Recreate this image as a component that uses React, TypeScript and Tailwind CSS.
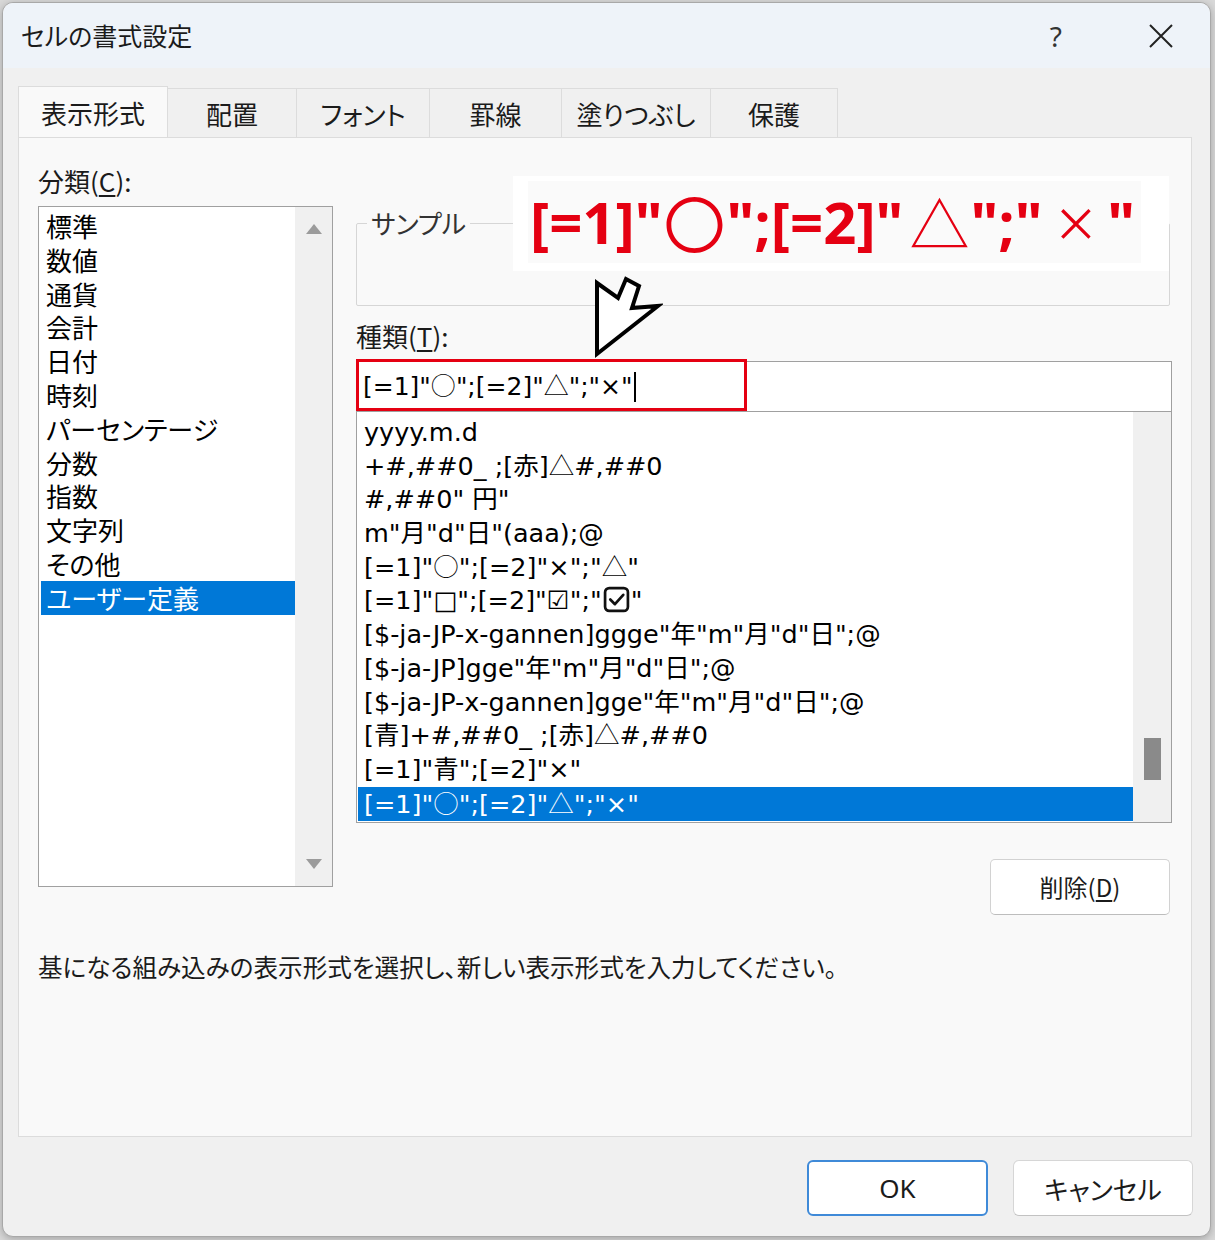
import React from "react";

function BoldCheck() {
  return (
    <svg width="27" height="27" viewBox="0 0 26 26" className="inline-block align-[-4px] mx-[1px]">
      <rect x="2" y="2" width="22" height="22" rx="4" fill="none" stroke="#111" strokeWidth="2.6" />
      <path d="M7 13 L11.5 17.5 L19.5 8.5" fill="none" stroke="#111" strokeWidth="2.6" strokeLinecap="round" strokeLinejoin="round" />
    </svg>
  );
}

const CJK = "[font-family:'Noto_Sans_CJK_JP','Noto_Sans',sans-serif] [font-feature-settings:'palt']";
const CJKW = "[font-family:'Noto_Sans_CJK_JP',sans-serif]";
const LAT = "[font-family:'DejaVu_Sans','Noto_Sans_CJK_JP',sans-serif]";
const NOTO = "[font-family:'Noto_Sans','Noto_Sans_CJK_JP',sans-serif]";

function Fmt({ s }: { s: string }) {
  const parts = s.split(/([○△])/);
  return (
    <>
      {parts.map((p, i) =>
        p === "○" || p === "△" ? (
          <span key={i} className={`${CJKW} font-light leading-none`}>{p}</span>
        ) : (
          <React.Fragment key={i}>{p}</React.Fragment>
        )
      )}
    </>
  );
}

export default function App() {
  const cats = ["標準", "数値", "通貨", "会計", "日付", "時刻", "パーセンテージ", "分数", "指数", "文字列", "その他"];
  const tabs = [
    { t: "表示形式", w: "w-[150px]" },
    { t: "配置", w: "w-[129px]" },
    { t: "フォント", w: "w-[133px]" },
    { t: "罫線", w: "w-[132px]" },
    { t: "塗りつぶし", w: "w-[149px]" },
    { t: "保護", w: "w-[127px]" },
  ];
  const fmts: React.ReactNode[] = [
    "yyyy.m.d",
    <Fmt s={"+#,##0_ ;[赤]△#,##0"} />,
    "#,##0\" 円\"",
    "m\"月\"d\"日\"(aaa);@",
    <Fmt s={"[=1]\"○\";[=2]\"×\";\"△\""} />,
    <>[=1]"□";[=2]"☑";"<BoldCheck />"</>,
    "[$-ja-JP-x-gannen]ggge\"年\"m\"月\"d\"日\";@",
    "[$-ja-JP]gge\"年\"m\"月\"d\"日\";@",
    "[$-ja-JP-x-gannen]gge\"年\"m\"月\"d\"日\";@",
    <Fmt s={"[青]+#,##0_ ;[赤]△#,##0"} />,
    "[=1]\"青\";[=2]\"×\"",
  ];
  return (
    <div className={`w-[1215px] h-[1240px] bg-[#d9d9d9] pt-[2px] pl-[2px] overflow-hidden ${CJK}`}>
      <div className="w-[1209px] h-[1235px] rounded-[11px] border border-[#a8a8a8] bg-[#f0f0f0] flex flex-col overflow-hidden shadow-[0_2px_8px_rgba(0,0,0,0.25)]">
        {/* title bar */}
        <div className="h-[65px] bg-[#eef3f9] flex items-center justify-between pl-[18px] pr-[36px] shrink-0">
          <span className="text-[25px] text-[#1b1b1b] leading-none">セルの書式設定</span>
          <div className="flex items-center gap-[86px]">
            <span className={`text-[28px] text-[#333] leading-none ${NOTO}`}>?</span>
            <svg width="26" height="26" viewBox="0 0 26 26">
              <path d="M2 2 L24 24 M24 2 L2 24" stroke="#222" strokeWidth="2" />
            </svg>
          </div>
        </div>
        {/* tabs */}
        <div className="flex mt-[20px] ml-[15px] h-[49px] shrink-0">
          {tabs.map((tb, i) =>
            i === 0 ? (
              <div key={i} className={`${tb.w} h-[51px] -mt-[2px] bg-[#f9f9f9] border border-b-0 border-[#dcdcdc] flex items-center justify-center text-[26px] text-[#1b1b1b] relative z-10`}>
                {tb.t}
              </div>
            ) : (
              <div key={i} className={`${tb.w} h-[49px] bg-[#f0f0f0] border border-l-0 border-b-0 border-[#dcdcdc] flex items-center justify-center text-[26px] text-[#1b1b1b]`}>
                {tb.t}
              </div>
            )
          )}
        </div>
        {/* panel */}
        <div className="relative ml-[15px] w-[1174px] h-[1000px] bg-[#f9f9f9] border border-[#dcdcdc] px-[19px] pt-[28px] shrink-0">
          <div className="flex gap-[23px]">
            {/* left column */}
            <div className="w-[295px] flex flex-col">
              <div className="h-[30px] leading-[30px] text-[26px] text-[#1b1b1b]">
                分類(<span className="underline underline-offset-[3px]">C</span>):
              </div>
              <div className="mt-[10px] h-[681px] border border-[#a0a0a0] bg-white flex">
                <div className="flex-1 pt-[2px] pl-[2px]">
                  {cats.map((c) => (
                    <div key={c} className="h-[33.8px] leading-[33.8px] text-[26px] text-black pl-[5px] whitespace-nowrap">
                      {c}
                    </div>
                  ))}
                  <div className="h-[33.8px] leading-[33.8px] text-[26px] text-white bg-[#0078d7] pl-[5px]">ユーザー定義</div>
                </div>
                <div className="w-[37px] bg-[#f0f0f0] flex flex-col items-center justify-between py-[17px]">
                  <svg width="16" height="10" viewBox="0 0 16 10"><path d="M8 0 L16 10 L0 10 Z" fill="#9b9b9b" /></svg>
                  <svg width="16" height="10" viewBox="0 0 16 10"><path d="M0 0 L16 0 L8 10 Z" fill="#9b9b9b" /></svg>
                </div>
              </div>
            </div>
            {/* right column */}
            <div className="w-[816px] flex flex-col">
              <fieldset className="mt-[42px] w-[814px] h-[98px] border border-[#d6d6d6] rounded-[2px]">
                <legend className="ml-[10px] px-[4px] text-[26px] leading-[30px] text-[#333]">サンプル</legend>
              </fieldset>
              <div className="mt-[15px] h-[30px] leading-[30px] text-[26px] text-[#1b1b1b]">
                種類(<span className="underline underline-offset-[3px]">T</span>):
              </div>
              <div className={`relative mt-[10px] h-[50px] border border-b-0 border-[#a0a0a0] bg-white flex items-center pl-[6px] text-[25px] text-black whitespace-nowrap ${LAT}`}>
                <span><Fmt s={"[=1]\"○\";[=2]\"△\";\"×\""} /></span>
                <span className="inline-block w-[2px] h-[30px] bg-black ml-[1px]" />
                <div className="absolute left-[-1px] top-[-3px] w-[391px] h-[52px] border-[3px] border-[#e50012]" />
              </div>
              <div className="h-[412px] border border-[#a0a0a0] bg-white flex">
                <div className="flex-1 pt-[4px] pl-[1px] overflow-hidden">
                  {fmts.map((f, i) => (
                    <div key={i} className={`h-[33.7px] leading-[33.7px] text-[25.5px] text-black pl-[6px] whitespace-nowrap ${LAT}`}>
                      {f}
                    </div>
                  ))}
                  <div className={`h-[34px] leading-[34px] text-[25.5px] text-white bg-[#0078d7] pl-[6px] whitespace-nowrap ${LAT}`}>
                    <Fmt s={"[=1]\"○\";[=2]\"△\";\"×\""} />
                  </div>
                </div>
                <div className="w-[38px] bg-[#f0f0f0] flex flex-col items-center">
                  <div className="mt-[326px] w-[17px] h-[42px] bg-[#8a8a8a]" />
                </div>
              </div>
              <button className="mt-[36px] self-end mr-[2px] w-[180px] h-[56px] bg-white border border-[#d2d2d2] border-b-[#bdbdbd] rounded-[5px] text-[24px] text-[#1b1b1b]">
                削除(<span className="underline underline-offset-[3px]">D</span>)
              </button>
            </div>
          </div>
          <div className="mt-[36px] h-[30px] leading-[30px] text-[24.6px] text-[#1b1b1b] whitespace-nowrap">
            基になる組み込みの表示形式を選択し、新しい表示形式を入力してください。
          </div>

          {/* annotation overlay */}
          <div className="absolute left-[494px] top-[38px] w-[656px] h-[95px] bg-white pt-[5px] pb-[8px] pl-[15px] pr-[28px]">
            <div className={`w-full h-full bg-[#fafafa] flex items-center text-[#e50012] text-[58px] font-bold whitespace-nowrap leading-none pl-[2px] ${NOTO}`}>
              <span>[=1]"</span>
              <span className={`font-normal text-[62px] mx-[1px] ${CJK}`}>〇</span>
              <span>";[=2]"</span>
              <span className={`font-normal text-[60px] ml-[6px] mr-[1px] ${CJK}`}>△</span>
              <span>";"</span>
              <span className={`font-light text-[68px] ml-[14px] mr-[12px] ${NOTO}`}>×</span>
              <span>"</span>
            </div>
          </div>
          <svg className="absolute left-[574px] top-[137px]" width="70" height="84" viewBox="0 0 70 84">
            <polygon points="4,8 25,23 33,4 46,11 39,33 65,31 4,79" fill="white" stroke="black" strokeWidth="4" strokeLinejoin="miter" />
          </svg>
        </div>
        {/* footer */}
        <div className="flex justify-end gap-[25px] mt-[23px] mr-[17px]">
          <button className={`w-[181px] h-[56px] bg-white border-2 border-[#3f8ad8] rounded-[6px] text-[26px] text-[#1b1b1b] ${NOTO}`}>
            OK
          </button>
          <button className="w-[180px] h-[56px] bg-white border border-[#d6d6d6] border-b-[#c2c2c2] rounded-[6px] text-[26px] text-[#1b1b1b]">
            キャンセル
          </button>
        </div>
      </div>
    </div>
  );
}
